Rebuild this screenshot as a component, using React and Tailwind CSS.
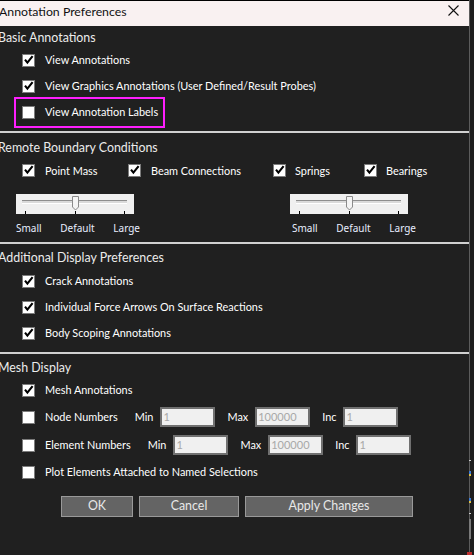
import React from "react";

function Check({ checked }) {
  return (
    <span className="w-[13px] h-[13px] bg-white border border-[#7c7c7c] shrink-0 relative block">
      {checked && (
        <svg width="11" height="11" viewBox="0 0 11 11" className="absolute left-0 top-0">
          <path d="M2 4.6 L4.4 7.6 L9.6 1.2" stroke="#000" strokeWidth="2.1" fill="none" />
        </svg>
      )}
    </span>
  );
}

function Row({ checked, label, h = "h-[26px]", children }) {
  return (
    <div className={`${h} flex items-center pl-[22px] shrink-0`}>
      <Check checked={checked} />
      <span className="ml-[10px] whitespace-nowrap">{label}</span>
      {children}
    </div>
  );
}

function Heading({ children, cls }) {
  return (
    <div className={`${cls} flex items-center pt-[2px] ml-[-2px] text-[12.4px] text-[#ececec] shrink-0 whitespace-nowrap`}>
      {children}
    </div>
  );
}

function Sep({ cls }) {
  return <div className={`${cls} h-[2px] bg-[#d0d0d0] shrink-0`} />;
}

function Slider() {
  return (
    <div className="w-[118px] h-[20px] bg-[#f0f0f0] shrink-0">
      <svg width="118" height="20" viewBox="0 0 118 20" shapeRendering="crispEdges">
        <rect x="6" y="6" width="105" height="1" fill="#8e8e8e" />
        <rect x="6" y="7" width="105" height="2" fill="#dadada" />
        <rect x="6" y="9" width="105" height="1" fill="#ffffff" />
        <polygon
          points="56.5,2.5 62.5,2.5 62.5,13 59.5,16 56.5,13"
          fill="#f4f4f4"
          stroke="#8a8a8a"
          strokeWidth="1"
          shapeRendering="geometricPrecision"
        />
        <rect x="9" y="17" width="1" height="3" fill="#000" />
        <rect x="59" y="17" width="1" height="3" fill="#000" />
        <rect x="108" y="17" width="1" height="3" fill="#000" />
      </svg>
    </div>
  );
}

function SliderLabels() {
  return (
    <div className="w-[124px] flex justify-between font-['Noto_Sans',sans-serif] text-[10px] text-[#e8eeff] shrink-0">
      <span>Small</span>
      <span>Default</span>
      <span>Large</span>
    </div>
  );
}

function Field({ value, cls = "" }) {
  return (
    <div
      className={`${cls} w-[55px] h-[20px] bg-[#f0f0f0] border-2 border-[#707070] flex items-center pl-[1px] text-[11px] text-[#a8a8a8] shrink-0`}
    >
      {value}
    </div>
  );
}

function Btn({ w, children }) {
  return (
    <div
      className={`${w} h-[21px] bg-[#646464] border border-[#999999] flex items-center justify-center text-[12.4px] text-[#e8e8e8] shrink-0`}
    >
      {children}
    </div>
  );
}

function RangeFields() {
  return (
    <>
      <span className="ml-[17px]">Min</span>
      <Field value="1" cls="ml-[7px]" />
      <span className="ml-[12px]">Max</span>
      <Field value="100000" cls="ml-[7px]" />
      <span className="ml-[12px]">Inc</span>
      <Field value="1" cls="ml-[7px]" />
    </>
  );
}

export default function App() {
  return (
    <div className="w-[474px] h-[555px] bg-[#1e1e1e] flex overflow-hidden relative font-['Lato',sans-serif] text-[10.9px] text-white">
      <div className="w-[469px] h-full bg-[#202020] border-t border-black flex flex-col shrink-0">
        {/* title bar */}
        <div className="h-[25px] bg-[#f9f1f1] flex items-start justify-between pr-[10px] shrink-0">
          <span className="ml-[-1px] mt-[2px] text-[12.3px] text-[#111] leading-[18px]">Annotation Preferences</span>
          <svg width="11" height="11" viewBox="0 0 11 11" className="mt-[4px]">
            <path d="M0.5 0.5 L10.5 10.5 M10.5 0.5 L0.5 10.5" stroke="#111" strokeWidth="1.1" />
          </svg>
        </div>

        {/* Basic Annotations */}
        <Heading cls="h-[20px] mt-[1px]">Basic Annotations</Heading>
        <Row checked label="View Annotations" />
        <Row checked label="View Graphics Annotations (User Defined/Result Probes)" />
        <div className="relative">
          <Row label="View Annotation Labels" />
          <div className="absolute left-[14px] top-[-2px] w-[151px] h-[31px] border-2 border-[#ff1fff]" />
        </div>
        <Sep cls="mt-[6px]" />

        {/* Remote Boundary Conditions */}
        <Heading cls="h-[22px] mt-[3px]">Remote Boundary Conditions</Heading>
        <div className="h-[26px] flex items-center pl-[22px] shrink-0">
          <div className="w-[106px] flex items-center shrink-0">
            <Check checked />
            <span className="ml-[10px]">Point Mass</span>
          </div>
          <div className="w-[145px] flex items-center shrink-0">
            <Check checked />
            <span className="ml-[10px]">Beam Connections</span>
          </div>
          <div className="w-[91px] flex items-center shrink-0">
            <Check checked />
            <span className="ml-[9px]">Springs</span>
          </div>
          <div className="flex items-center shrink-0">
            <Check checked />
            <span className="ml-[9px]">Bearings</span>
          </div>
        </div>
        <div className="mt-[10px] flex pl-[16px] shrink-0">
          <Slider />
          <div className="ml-[156px]">
            <Slider />
          </div>
        </div>
        <div className="mt-[7px] h-[14px] flex items-center pl-[16px] shrink-0">
          <SliderLabels />
          <div className="ml-[152px]">
            <SliderLabels />
          </div>
        </div>
        <Sep cls="mt-[7px]" />

        {/* Additional Display Preferences */}
        <Heading cls="h-[22px] mt-[2px]">Additional Display Preferences</Heading>
        <Row checked label="Crack Annotations" />
        <Row checked label="Individual Force Arrows On Surface Reactions" />
        <Row checked label="Body Scoping Annotations" />
        <Sep cls="mt-[6px]" />

        {/* Mesh Display */}
        <Heading cls="h-[20px] mt-[3px]">Mesh Display</Heading>
        <Row checked label="Mesh Annotations" />
        <Row label="Node Numbers" h="h-[28px]">
          <RangeFields />
        </Row>
        <Row label="Element Numbers" h="h-[28px]">
          <RangeFields />
        </Row>
        <Row label="Plot Elements Attached to Named Selections" />

        {/* Buttons */}
        <div className="mt-[11px] flex pl-[61px] gap-[6px] shrink-0">
          <Btn w="w-[72px]">OK</Btn>
          <Btn w="w-[100px]">Cancel</Btn>
          <Btn w="w-[168px]">Apply Changes</Btn>
        </div>
      </div>
      <div className="w-[1px] h-full bg-[#5c5c5c] shrink-0" />
      {/* edge marks of window behind */}
      <div className="absolute left-[469px] top-[460px] w-[2px] h-[1px] bg-[#cfcfcf]" />
      <div className="absolute left-[469px] top-[471px] w-[2px] h-[4px] bg-[#3b7bd8]" />
      <div className="absolute left-[469px] top-[474px] w-[2px] h-[2px] bg-[#e0c040]" />
      <div className="absolute left-[469px] top-[498px] w-[2px] h-[4px] bg-[#3b7bd8]" />
      <div className="absolute left-[469px] top-[501px] w-[2px] h-[2px] bg-[#e0c040]" />
      <div className="absolute left-[469px] top-[513px] w-[2px] h-[1px] bg-[#d0d0d0]" />
      <div className="absolute left-[469px] top-[519px] w-[2px] h-[20px] bg-[#7a7a7a]" />
      <div className="absolute left-[467px] top-[552px] w-[5px] h-[3px] bg-[#c03030]" />
    </div>
  );
}
